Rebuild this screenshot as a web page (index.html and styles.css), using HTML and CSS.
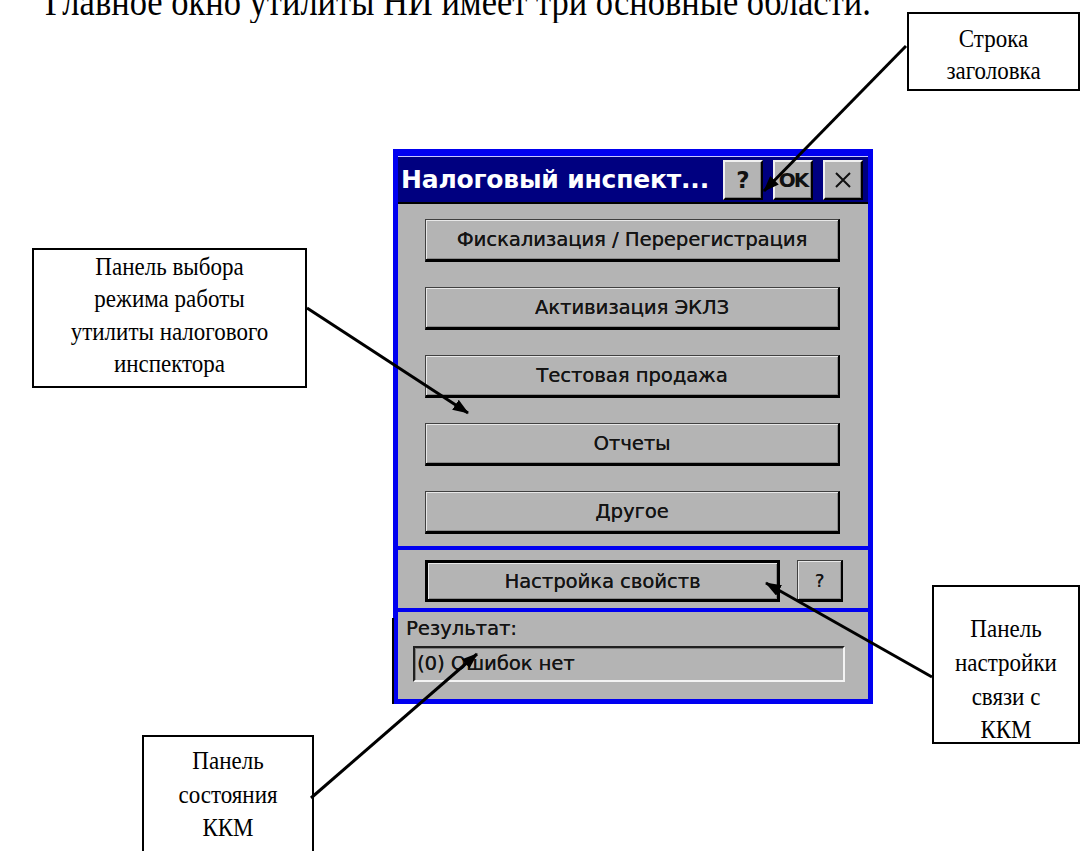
FILE: index.html
```html
<!DOCTYPE html>
<html lang="ru">
<head>
  <meta charset="UTF-8">
  <title>Утилита налогового инспектора</title>
  <link rel="stylesheet" href="styles.css">
</head>
<body>

  <div class="page">
    <p class="lead">Главное окно утилиты НИ имеет три основные области.</p>

    <!-- Окно утилиты -->
    <div class="window">
      <div class="titlebar">
        <span class="title">Налоговый инспект...</span>
        <span class="tbtn">?</span>
        <span class="tbtn tbtn-ok">OK</span>
        <span class="tbtn">
          <svg width="18" height="18" viewBox="0 0 18 18">
            <path d="M2 2 L16 16 M16 2 L2 16" stroke="#111" stroke-width="2" fill="none"/>
          </svg>
        </span>
      </div>

      <div class="panel modes">
        <div class="btn">Фискализация / Перерегистрация</div>
        <div class="btn">Активизация ЭКЛЗ</div>
        <div class="btn">Тестовая продажа</div>
        <div class="btn">Отчеты</div>
        <div class="btn">Другое</div>
      </div>

      <div class="panel setup">
        <div class="btn btn-default">Настройка свойств</div>
        <div class="btn btn-help">?</div>
      </div>

      <div class="panel status">
        <div class="status-label">Результат:</div>
        <div class="status-field">(0) Ошибок нет</div>
      </div>
    </div>

    <!-- Выноски -->
    <div class="note note-title"><div class="note-text">Строка<br>заголовка</div></div>
    <div class="note note-modes"><div class="note-text">Панель выбора<br>режима работы<br>утилиты налогового<br>инспектора</div></div>
    <div class="note note-setup"><div class="note-text">Панель<br>настройки<br>связи с<br>ККМ</div></div>
    <div class="note note-status"><div class="note-text">Панель<br>состояния<br>ККМ</div></div>

    <svg class="arrows" width="1082" height="851" viewBox="0 0 1082 851">
      <defs>
        <marker id="head" markerUnits="userSpaceOnUse" markerWidth="16" markerHeight="12" refX="15" refY="6" orient="auto">
          <path d="M0 0 L16 6 L0 12 Z" fill="#000"/>
        </marker>
      </defs>
      <line x1="906" y1="46" x2="764" y2="191" marker-end="url(#head)"/>
      <line x1="307" y1="308" x2="468" y2="413" marker-end="url(#head)"/>
      <line x1="932" y1="677" x2="766" y2="583" marker-end="url(#head)"/>
      <line x1="311" y1="798" x2="477" y2="654" marker-end="url(#head)"/>
    </svg>
  </div>

</body>
</html>
```

FILE: styles.css
```css
* {
  box-sizing: border-box;
}

body {
  margin: 0;
  background: #fff;
}

.page {
  position: relative;
  width: 1082px;
  height: 851px;
  overflow: hidden;
  font-family: "Liberation Serif", "Times New Roman", serif;
  color: #000;
}

.lead {
  position: absolute;
  left: 45px;
  top: -16px;
  margin: 0;
  font-size: 34.5px;
  line-height: 40px;
  white-space: nowrap;
  transform: scaleY(1.15);
  transform-origin: left bottom;
}

/* window */

.window {
  position: absolute;
  left: 393px;
  top: 149px;
  width: 480px;
  display: flex;
  flex-direction: column;
  padding: 7px 5px 5px;
  background: #0000f0;
  font-family: "DejaVu Sans", Tahoma, sans-serif;
}

/* dark edge of the screenshot at the lower left */
.window::before {
  content: "";
  position: absolute;
  left: -1px;
  top: 469px;
  bottom: 0;
  width: 2px;
  background: #000;
}

.titlebar {
  height: 48px;
  display: flex;
  align-items: center;
  gap: 10px;
  padding: 0 5px 0 3px;
  background: #000080;
  border-top: 1px solid #c8c8ff;
  border-bottom: 2px solid #000;
}

.title {
  flex: 1;
  min-width: 0;
  color: #fff;
  font-weight: bold;
  font-size: 25px;
  letter-spacing: -0.2px;
  white-space: nowrap;
}

.tbtn {
  flex: none;
  width: 40px;
  height: 40px;
  display: flex;
  align-items: center;
  justify-content: center;
  background: #b4b4b4;
  border: 2px solid;
  border-color: #f0f0f0 #000 #000 #f0f0f0;
  box-shadow: inset -1px -1px #808080;
  font-weight: bold;
  font-size: 23px;
  color: #111;
}

.tbtn-ok {
  font-size: 20px;
  letter-spacing: -2px;
}

.panel {
  background: #b4b4b4;
}

.modes {
  height: 342px;
  display: flex;
  flex-direction: column;
  gap: 25px;
  padding: 15px 28px 0 27px;
}

.btn {
  height: 43px;
  display: flex;
  align-items: center;
  justify-content: center;
  background: #b4b4b4;
  border: 1px solid #404040;
  border-right: 2px solid #000;
  border-bottom: 3px solid #000;
  box-shadow: inset 1px 1px #e8e8e8, inset -1px -1px #8a8a8a;
  font-size: 19.5px;
  color: #141414;
  text-shadow: 0.2px 0 0 #141414;
  white-space: nowrap;
}

.setup {
  height: 58px;
  margin-top: 4px;
  display: flex;
  gap: 17px;
  padding: 10px 0 0 27px;
}

.setup .btn {
  height: 42px;
}

.btn-default {
  width: 355px;
  border: 3px solid #000;
}

.btn-help {
  width: 46px;
  font-size: 18px;
}

.status {
  height: 87px;
  margin-top: 4px;
  padding: 5px 23px 0 8px;
}

.status-label {
  height: 24px;
  font-size: 19.5px;
  line-height: 24px;
  color: #141414;
  text-shadow: 0.2px 0 0 #141414;
}

.status-field {
  height: 36px;
  margin: 5px 0 0 7px;
  padding: 0 2px;
  border: 2px solid;
  border-color: #202020 #f4f4f4 #f4f4f4 #202020;
  box-shadow: inset 1px 1px #808080;
  font-size: 19.5px;
  line-height: 32px;
  color: #141414;
  text-shadow: 0.2px 0 0 #141414;
  white-space: nowrap;
}

/* callouts */

.note {
  position: absolute;
  background: #fff;
  border: 2px solid #000;
  text-align: center;
  font-size: 23px;
  line-height: 29px;
  overflow: hidden;
}

.note-text {
  white-space: nowrap;
  transform: scaleY(1.12);
}

.note-title {
  left: 907px;
  top: 12px;
  width: 173px;
  height: 79px;
  padding-top: 13px;
  line-height: 28px;
}

.note-modes {
  left: 32px;
  top: 248px;
  width: 275px;
  height: 140px;
  padding-top: 7px;
}

.note-setup {
  left: 932px;
  top: 585px;
  width: 148px;
  height: 159px;
  padding-top: 33px;
  line-height: 30px;
}

.note-status {
  left: 142px;
  top: 735px;
  width: 172px;
  height: 140px;
  padding-top: 13px;
  line-height: 30px;
}

.arrows {
  position: absolute;
  left: 0;
  top: 0;
  pointer-events: none;
}

.arrows line {
  stroke: #000;
  stroke-width: 3;
}
```
